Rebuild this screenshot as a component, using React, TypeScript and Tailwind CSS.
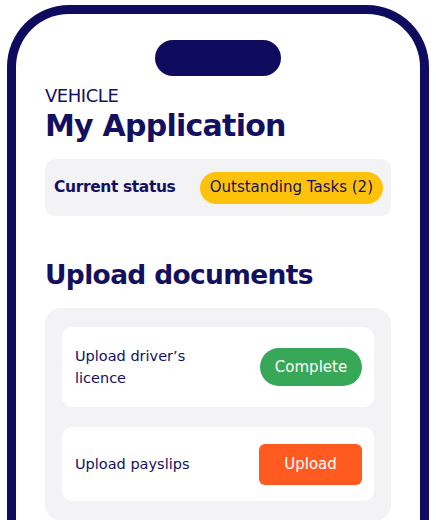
import React from 'react';

export default function App() {
  return (
    <div className="w-[436px] h-[520px] overflow-hidden bg-white" style={{ fontFamily: '"DejaVu Sans", "Noto Sans", sans-serif' }}>
      <div className="mx-[7px] mt-[5px] h-[560px] rounded-t-[62px] border-[9px] border-b-0 border-[#0f0b5e] px-[29px] pt-[26px] text-[#13115f]">
        {/* notch */}
        <div className="flex justify-center">
          <div className="h-[36px] w-[126px] rounded-full bg-[#0f0b5e]" />
        </div>

        <div className="mt-[9px] text-[18px] leading-[22px] tracking-tight">VEHICLE</div>
        <h1 className="text-[30px] font-semibold leading-[38px] tracking-tight">My Application</h1>

        <div className="mt-[14px] flex h-[57px] items-center justify-between rounded-[10px] bg-[#f3f3f6] pl-[9px] pr-[8px]">
          <span className="text-[15.5px] font-semibold tracking-tight">Current status</span>
          <span className="flex h-[32px] items-center rounded-full bg-[#ffc20a] px-[10px] text-[15px]">
            Outstanding Tasks (2)
          </span>
        </div>

        <h2 className="mt-[42px] text-[26.5px] font-semibold leading-[34px] tracking-tight">Upload documents</h2>

        <div className="mt-[16px] flex flex-col gap-[20px] rounded-[16px] bg-[#f3f3f6] px-[17px] pt-[19px] pb-[20px]">
          <div className="flex h-[80px] items-center justify-between rounded-[10px] bg-white pl-[13px] pr-[12px]">
            <span className="w-[150px] text-[14.5px] leading-[22px]">Upload driver&rsquo;s licence</span>
            <span className="flex h-[38px] w-[102px] items-center justify-center rounded-full bg-[#37a857] text-[15px] text-white">
              Complete
            </span>
          </div>
          <div className="flex h-[74px] items-center justify-between rounded-[10px] bg-white pl-[13px] pr-[12px]">
            <span className="text-[14.5px] leading-[22px]">Upload payslips</span>
            <span className="flex h-[41px] w-[103px] items-center justify-center rounded-[6px] bg-[#ff5a1f] text-[15px] text-white">
              Upload
            </span>
          </div>
        </div>
      </div>
    </div>
  );
}
